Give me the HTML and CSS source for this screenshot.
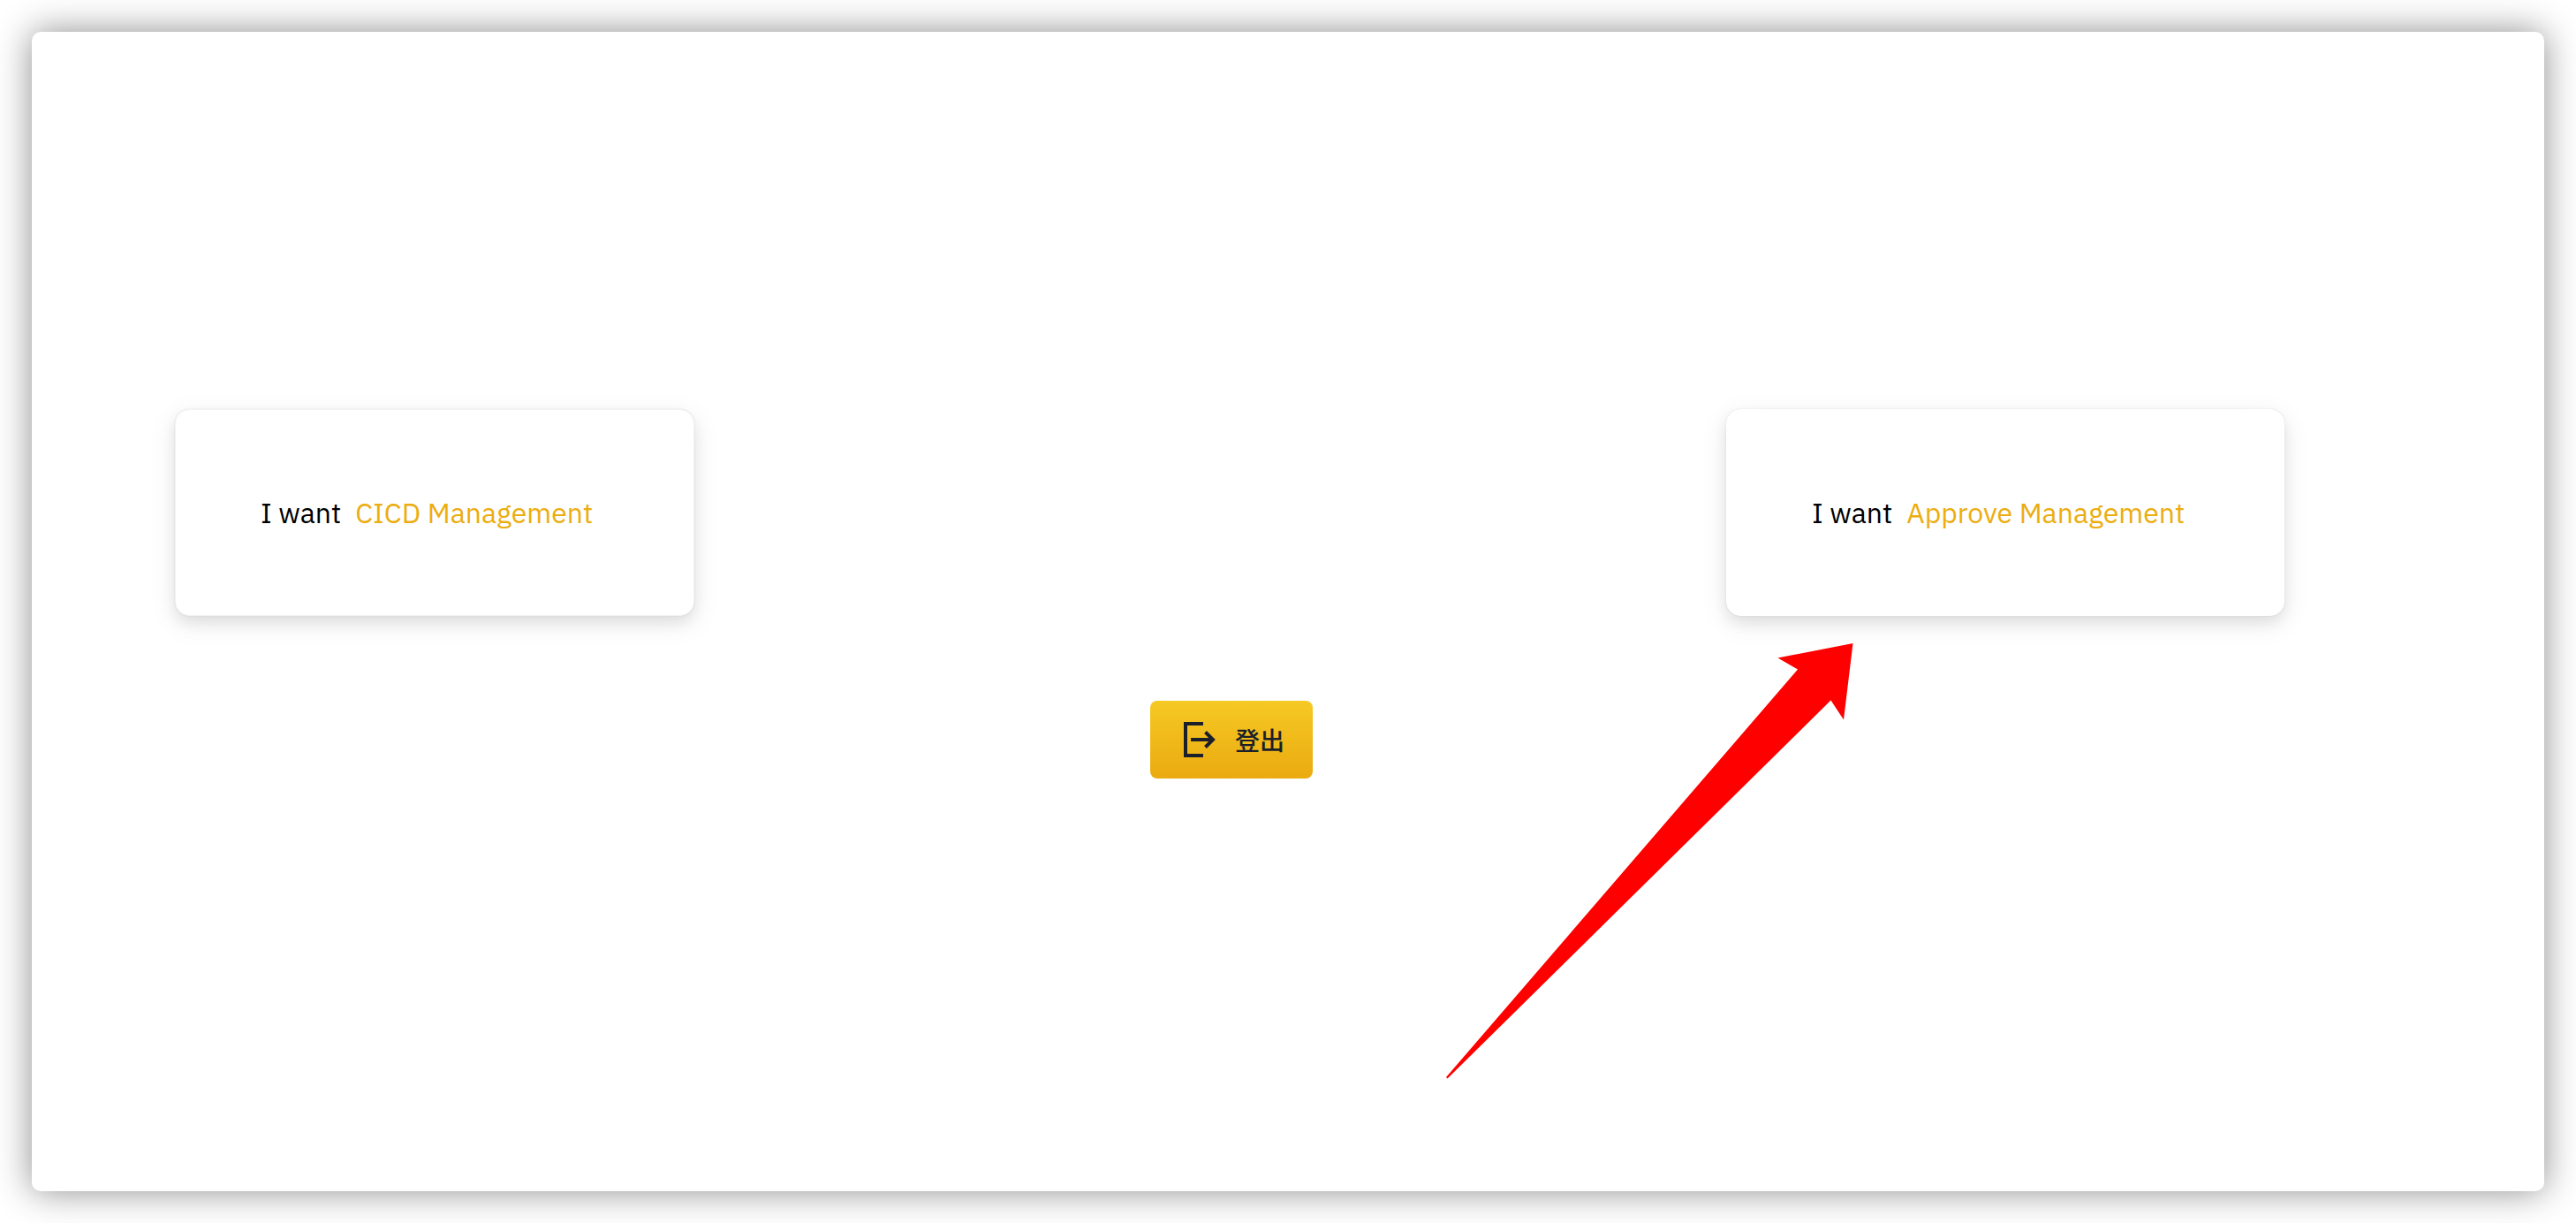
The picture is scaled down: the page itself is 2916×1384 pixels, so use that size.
FILE: index.html
```html
<!DOCTYPE html>
<html lang="zh-Hant">
<head>
<meta charset="utf-8">
<meta name="viewport" content="width=device-width, initial-scale=1">
<title>Management</title>
<link rel="stylesheet" href="styles.css">
</head>
<body>
<main class="panel">
  <a class="card card-cicd" href="#cicd"><span>I want</span><span class="card-target">CICD Management</span></a>
  <button class="logout" type="button">
    <svg class="logout-icon" viewBox="0 0 36 40" aria-hidden="true">
      <path d="M22 2H2v36h20M8 20h25M24.500 11.500l8.500 8.500-8.500 8.500" fill="none" stroke="currentColor" stroke-width="4"/>
    </svg>
    <span>登出</span>
  </button>
  <a class="card card-approve" href="#approve"><span>I want</span><span class="card-target">Approve Management</span></a>
  <svg class="pointer" viewBox="0 0 461 493" aria-hidden="true">
    <path d="M460.500 0L375.500 16.500 398 29.500 0 491 1.500 492.500 435.500 64.500 450 86.500z" fill="#ff0000"/>
  </svg>
</main>
</body>
</html>
```
FILE: styles.css
```css
* {
  box-sizing: border-box;
}

body {
  margin: 0;
  padding: 36px;
  background: #fff;
  font-family: "IBM Plex Sans", Roboto, "Noto Sans CJK TC", sans-serif;
}

.panel {
  position: relative;
  display: grid;
  grid-template-columns:
    162fr minmax(max-content, 588fr)
    516fr minmax(max-content, 184fr)
    468fr minmax(max-content, 632fr) 294fr;
  grid-template-rows: 427fr auto auto 468fr;
  min-height: calc(100vh - 72px);
  border-radius: 10px;
  background: #fff;
  box-shadow: 0 0 40px rgba(0, 0, 0, 0.45);
}

.card {
  grid-row: 2;
  display: flex;
  gap: 16px;
  padding: 96px;
  border: 1px solid #fff;
  border-radius: 16px;
  background: #fff;
  color: #000;
  font-size: 32px;
  font-weight: 400;
  line-height: 40px;
  text-decoration: none;
  white-space: nowrap;
  box-shadow: 0 8px 32px rgba(0, 0, 0, 0.08), 0 8px 16px rgba(0, 0, 0, 0.08), 0 0 2px rgba(0, 0, 0, 0.1);
}

.card-cicd {
  grid-column: 2;
  border-color: #f3f3f4;
}

.card-approve {
  grid-column: 6;
}

.card-target {
  color: #ecad10;
}

.logout {
  grid-column: 4;
  grid-row: 3;
  display: flex;
  align-items: center;
  gap: 22px;
  height: 88px;
  margin: 96px 0 0;
  padding: 0 30px 0 38px;
  border: 0;
  border-radius: 8px;
  background: linear-gradient(#f6c924, #eaaa10);
  color: #1b1f2a;
  font: 500 28px/40px "Noto Sans CJK TC", sans-serif;
  cursor: pointer;
}

.logout-icon {
  width: 36px;
  height: 40px;
}

.pointer {
  position: absolute;
  top: 52.75%;
  left: 56.3%;
  width: 461px;
  height: 493px;
  pointer-events: none;
}
```
